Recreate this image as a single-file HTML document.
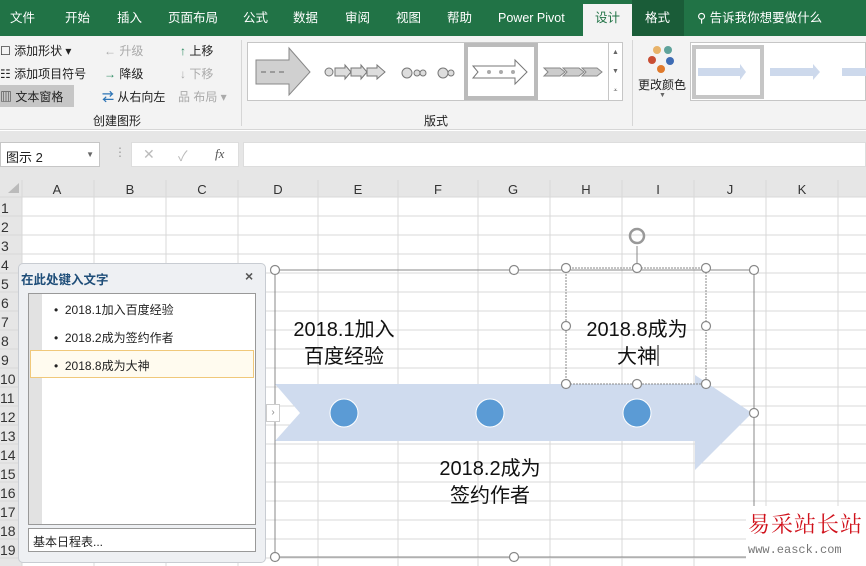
<!DOCTYPE html>
<html><head><meta charset="utf-8"><style>
*{margin:0;padding:0;box-sizing:border-box}
body{width:866px;height:566px;overflow:hidden;background:#fff;font-family:"Liberation Sans","Noto Sans CJK SC",sans-serif;font-size:12px;color:#222;position:relative}
.a{position:absolute;white-space:nowrap}
.tab{position:absolute;top:0;height:36px;line-height:36px;color:#fff;font-size:12.5px}
</style></head><body>
<!-- tab bar -->
<div class="a" style="left:0;top:0;width:866px;height:36px;background:#217346"></div>
<div class="tab" style="left:10px">文件</div>
<div class="tab" style="left:65px">开始</div>
<div class="tab" style="left:117px">插入</div>
<div class="tab" style="left:168px">页面布局</div>
<div class="tab" style="left:243px">公式</div>
<div class="tab" style="left:293px">数据</div>
<div class="tab" style="left:345px">审阅</div>
<div class="tab" style="left:396px">视图</div>
<div class="tab" style="left:447px">帮助</div>
<div class="tab" style="left:498px">Power Pivot</div>
<div class="a" style="left:583px;top:4px;width:49px;height:32px;background:#f3f3f3"></div>
<div class="tab" style="left:595px;color:#217346">设计</div>
<div class="a" style="left:632px;top:0;width:52px;height:36px;background:#1a5c38"></div>
<div class="tab" style="left:645px">格式</div>
<div class="tab" style="left:697px">&#9906; 告诉我你想要做什么</div>
<!-- ribbon -->
<div class="a" style="left:0;top:36px;width:866px;height:94px;background:#f3f3f3;border-bottom:1px solid #d6d6d6"></div>
<div class="a" style="left:0;top:42px;">☐ 添加形状 ▾</div>
<div class="a" style="left:0;top:65px;">☷ 添加项目符号</div>
<div class="a" style="left:0;top:85px;width:74px;height:22px;background:#c6c6c6"></div>
<div class="a" style="left:0;top:88px;">▥ 文本窗格</div>
<div class="a" style="left:104px;top:42px;color:#aaa">← 升级</div>
<div class="a" style="left:104px;top:65px;"><span style="color:#2a8a60">→</span> 降级</div>
<div class="a" style="left:102px;top:88px;"><span style="color:#2e75b6;font-weight:bold">⇄</span> 从右向左</div>
<div class="a" style="left:180px;top:42px;"><span style="color:#2a8a60">↑</span> 上移</div>
<div class="a" style="left:180px;top:65px;color:#aaa">↓ 下移</div>
<div class="a" style="left:178px;top:88px;color:#aaa">品 布局 ▾</div>
<div class="a" style="left:93px;top:112px;">创建图形</div>
<div class="a" style="left:241px;top:40px;width:1px;height:86px;background:#d6d6d6"></div>
<div class="a" style="left:424px;top:112px;">版式</div>
<div class="a" style="left:247px;top:42px;width:376px;height:59px;background:#fff;border:1px solid #c6c6c6"></div>
<svg class="a" style="left:247px;top:42px" width="376" height="59">
<polygon points="9,18 42,18 42,6 63,30 42,53 42,42 9,42" fill="#d0d0d0" stroke="#888"/>
<line x1="14" y1="30" x2="40" y2="30" stroke="#666" stroke-dasharray="5,4"/>
<g fill="#ddd" stroke="#777"><circle cx="82" cy="30" r="4"/><polygon points="88,26 98,26 98,23 104,30 98,37 98,34 88,34"/><polygon points="104,26 114,26 114,23 120,30 114,37 114,34 104,34"/><polygon points="120,26 130,26 130,23 138,30 130,37 130,34 120,34"/>
<circle cx="160" cy="31" r="5"/><circle cx="170" cy="31" r="3"/><circle cx="176" cy="31" r="3"/><circle cx="196" cy="31" r="5"/><circle cx="204" cy="31" r="3"/></g>
<rect x="219" y="3" width="70" height="53" fill="#fff" stroke="#bbb" stroke-width="4"/>
<polygon points="226,24 268,24 268,18 280,30 268,42 268,36 226,36 231,30" fill="#fff" stroke="#777"/>
<g fill="#aaa"><circle cx="242" cy="30" r="2"/><circle cx="254" cy="30" r="2"/><circle cx="266" cy="30" r="2"/></g>
<g fill="#ccc" stroke="#888"><polygon points="297,26 313,26 318,30 313,34 297,34 301,30"/><polygon points="316,26 332,26 337,30 332,34 316,34 320,30"/><polygon points="335,26 350,26 355,30 350,34 335,34 339,30"/></g>
</svg>
<div class="a" style="left:608px;top:42px;width:15px;height:59px;border:1px solid #c6c6c6;background:#fff;font-size:7px;color:#666;text-align:center;line-height:19px">▲<br>▼<br>⩡</div>
<div class="a" style="left:632px;top:40px;width:1px;height:86px;background:#d6d6d6"></div>
<svg class="a" style="left:645px;top:44px" width="36" height="30"><circle cx="12" cy="6" r="4" fill="#e8b36a"/><circle cx="23" cy="6" r="4" fill="#5fa39b"/><circle cx="7" cy="16" r="4" fill="#c94e34"/><circle cx="25" cy="17" r="4" fill="#3e6cb4"/><circle cx="16" cy="25" r="4" fill="#e07a2c"/></svg>
<div class="a" style="left:638px;top:76px;">更改颜色</div>
<div class="a" style="left:659px;top:92px;font-size:7px;color:#666">▼</div>
<div class="a" style="left:690px;top:42px;width:176px;height:59px;background:#fff;border:1px solid #c6c6c6"></div>
<div class="a" style="left:692px;top:45px;width:72px;height:54px;border:4px solid #c6c6c6"></div>
<svg class="a" style="left:690px;top:42px" width="176" height="59"><g fill="#cdd9ec"><polygon points="8,26 50,26 50,22 56,30 50,38 50,34 8,34"/><polygon points="80,26 123,26 123,22 130,30 123,38 123,34 80,34"/><polygon points="152,26 176,26 176,34 152,34"/></g></svg>
<!-- formula bar -->
<div class="a" style="left:0;top:131px;width:866px;height:49px;background:#e6e6e6"></div>
<div class="a" style="left:0;top:142px;width:100px;height:25px;background:#fff;border:1px solid #c6c6c6;padding:4px 5px;font-size:13px">图示 2<span style="float:right;font-size:8px;color:#666;margin-top:3px">▼</span></div>
<div class="a" style="left:114px;top:145px;color:#999">⋮</div>
<div class="a" style="left:131px;top:142px;width:108px;height:25px;background:#fff;border:1px solid #ddd"></div>
<div class="a" style="left:143px;top:146px;color:#bbb;font-size:14px">✕</div>
<div class="a" style="left:178px;top:146px;color:#bbb;font-size:14px">✓</div>
<div class="a" style="left:215px;top:146px;color:#555;font-style:italic;font-family:'Liberation Serif',serif;font-size:13px">fx</div>
<div class="a" style="left:243px;top:142px;width:623px;height:25px;background:#fff;border:1px solid #ddd"></div>
<!-- grid -->
<svg class="a" style="left:0;top:180px" width="866" height="386">
<rect x="0" y="0" width="866" height="17" fill="#e6e6e6"/>
<rect x="0" y="0" width="22" height="386" fill="#e6e6e6"/>
<polygon points="8,13 19,3 19,13" fill="#bbb"/>
<g stroke="#d8d8d8">
<line x1="22" y1="0" x2="22" y2="386"/><line x1="94" y1="0" x2="94" y2="386"/><line x1="166" y1="0" x2="166" y2="386"/><line x1="238" y1="0" x2="238" y2="386"/><line x1="318" y1="0" x2="318" y2="386"/><line x1="398" y1="0" x2="398" y2="386"/><line x1="478" y1="0" x2="478" y2="386"/><line x1="550" y1="0" x2="550" y2="386"/><line x1="622" y1="0" x2="622" y2="386"/><line x1="694" y1="0" x2="694" y2="386"/><line x1="766" y1="0" x2="766" y2="386"/><line x1="838" y1="0" x2="838" y2="386"/>
<line x1="0" y1="17" x2="866" y2="17"/><line x1="0" y1="36" x2="866" y2="36"/><line x1="0" y1="55" x2="866" y2="55"/><line x1="0" y1="74" x2="866" y2="74"/><line x1="0" y1="93" x2="866" y2="93"/><line x1="0" y1="112" x2="866" y2="112"/><line x1="0" y1="131" x2="866" y2="131"/><line x1="0" y1="150" x2="866" y2="150"/><line x1="0" y1="169" x2="866" y2="169"/><line x1="0" y1="188" x2="866" y2="188"/><line x1="0" y1="207" x2="866" y2="207"/><line x1="0" y1="226" x2="866" y2="226"/><line x1="0" y1="245" x2="866" y2="245"/><line x1="0" y1="264" x2="866" y2="264"/><line x1="0" y1="283" x2="866" y2="283"/><line x1="0" y1="302" x2="866" y2="302"/><line x1="0" y1="321" x2="866" y2="321"/><line x1="0" y1="340" x2="866" y2="340"/><line x1="0" y1="359" x2="866" y2="359"/><line x1="0" y1="378" x2="866" y2="378"/>
</g>
<g font-size="13" fill="#333" text-anchor="middle" font-family="Liberation Sans,sans-serif">
<text x="57" y="14">A</text><text x="130" y="14">B</text><text x="202" y="14">C</text><text x="278" y="14">D</text><text x="358" y="14">E</text><text x="438" y="14">F</text><text x="513" y="14">G</text><text x="586" y="14">H</text><text x="658" y="14">I</text><text x="730" y="14">J</text><text x="802" y="14">K</text>
</g>
<g font-size="14" fill="#333" font-family="Liberation Sans,sans-serif">
<text x="1" y="33">1</text><text x="1" y="52">2</text><text x="1" y="71">3</text><text x="1" y="90">4</text><text x="1" y="109">5</text><text x="1" y="128">6</text><text x="1" y="147">7</text><text x="1" y="166">8</text><text x="1" y="185">9</text><text x="0" y="204">10</text><text x="0" y="223">11</text><text x="0" y="242">12</text><text x="0" y="261">13</text><text x="0" y="280">14</text><text x="0" y="299">15</text><text x="0" y="318">16</text><text x="0" y="337">17</text><text x="0" y="356">18</text><text x="0" y="375">19</text>
</g>
</svg>
<!-- smartart -->
<svg class="a" style="left:0;top:0" width="866" height="566">
<polygon points="275,384 695,384 695,375 752,413 695,470 695,441 275,441 300,413" fill="#cfdbee"/>
<g fill="#5b9bd5" stroke="#fff" stroke-width="1"><circle cx="344" cy="413" r="14"/><circle cx="490" cy="413" r="14"/><circle cx="637" cy="413" r="14"/></g>
<rect x="275" y="270" width="479" height="287" fill="none" stroke="#888"/>
<rect x="566" y="268" width="140" height="116" fill="none" stroke="#888" stroke-dasharray="2,1"/>
<line x1="637" y1="246" x2="637" y2="268" stroke="#888"/>
<circle cx="637" cy="236" r="7" fill="none" stroke="#999" stroke-width="2.5"/>
<g fill="#fff" stroke="#888" stroke-width="1.2">
<circle cx="275" cy="270" r="4.5"/><circle cx="514" cy="270" r="4.5"/><circle cx="754" cy="270" r="4.5"/><circle cx="754" cy="413" r="4.5"/><circle cx="275" cy="557" r="4.5"/><circle cx="514" cy="557" r="4.5"/>
<circle cx="566" cy="268" r="4.5"/><circle cx="637" cy="268" r="4.5"/><circle cx="706" cy="268" r="4.5"/><circle cx="566" cy="326" r="4.5"/><circle cx="706" cy="326" r="4.5"/><circle cx="566" cy="384" r="4.5"/><circle cx="637" cy="384" r="4.5"/><circle cx="706" cy="384" r="4.5"/>
</g>
<g font-size="20" fill="#111" text-anchor="middle" font-family="Liberation Sans,Noto Sans CJK SC,sans-serif">
<text x="344" y="336">2018.1加入</text><text x="344" y="363">百度经验</text>
<text x="490" y="475">2018.2成为</text><text x="490" y="502">签约作者</text>
<text x="637" y="336">2018.8成为</text><text x="637" y="363">大神</text>
</g>
<line x1="658" y1="345" x2="658" y2="366" stroke="#111"/>
</svg>
<!-- text pane -->
<div class="a" style="left:18px;top:263px;width:248px;height:300px;background:#eef0f3;border:1px solid #c8ccd2;border-radius:5px"></div>
<div class="a" style="left:21px;top:269px;color:#1f4e79;font-weight:bold;font-size:12.5px">在此处键入文字</div>
<div class="a" style="left:245px;top:268px;color:#555;font-size:14px;font-weight:bold">×</div>
<div class="a" style="left:28px;top:293px;width:228px;height:232px;background:#fff;border:1px solid #999"></div>
<div class="a" style="left:29px;top:294px;width:13px;height:230px;background:#e2e2e2"></div>
<div class="a" style="left:30px;top:350px;width:224px;height:28px;background:#fffbef;border:1px solid #f0c87a"></div>
<div class="a" style="left:54px;top:301px">•&nbsp; 2018.1加入百度经验</div>
<div class="a" style="left:54px;top:329px">•&nbsp; 2018.2成为签约作者</div>
<div class="a" style="left:54px;top:357px">•&nbsp; 2018.8成为大神</div>
<div class="a" style="left:28px;top:528px;width:228px;height:24px;background:#fff;border:1px solid #999;padding:4px 4px">基本日程表...</div>
<div class="a" style="left:266px;top:404px;width:14px;height:18px;background:#fff;border:1px solid #ccc;color:#888;font-size:10px;text-align:center;line-height:16px">›</div>
<!-- watermark -->
<div class="a" style="left:746px;top:506px;width:120px;height:60px;background:#fff"></div>
<div class="a" style="left:748px;top:508px;color:#d0101a;font-size:22px;font-family:'Noto Serif CJK SC',serif;letter-spacing:1px">易采站长站</div>
<div class="a" style="left:748px;top:543px;color:#777;font-size:12px;font-family:'Liberation Mono',monospace">www.easck.com</div>
</body></html>
